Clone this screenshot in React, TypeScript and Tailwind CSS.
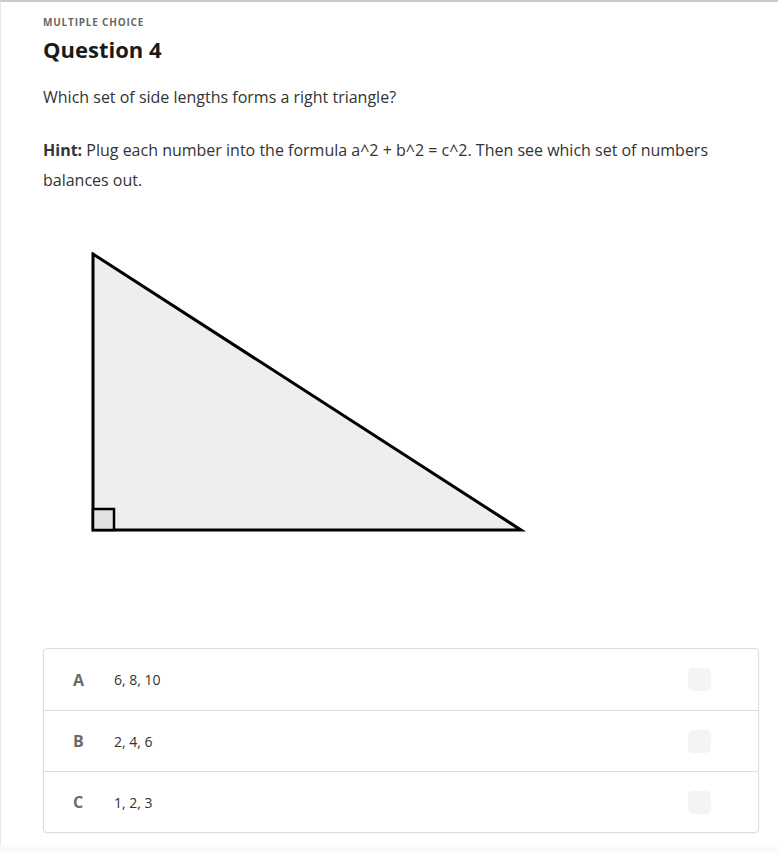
const options = [
  { key: "A", text: "6, 8, 10" },
  { key: "B", text: "2, 4, 6" },
  { key: "C", text: "1, 2, 3" },
];

const Triangle: React.FC = () => (
  <svg width="440" height="290" viewBox="0 0 440 290" className="block">
    <polygon points="2,2 2,278 430,278" fill="#eeeeee" stroke="#000" strokeWidth="3" strokeLinejoin="miter" />
    <rect x="2" y="257" width="21" height="21" fill="#e2e2e2" stroke="#000" strokeWidth="2.5" />
  </svg>
);

export default function App() {
  return (
    <div className="min-h-[852px] bg-[#fafafa] font-['Open_Sans',sans-serif] text-[#333]">
      <div className="border-t-2 border-[#c9c9c9] border-l border-l-[#e6e6e6] bg-white pb-[12px]">
        <div className="px-[42px] pt-[13px]">
          <div className="text-[10px] font-bold tracking-[0.08em] text-[#666] leading-[14px]">MULTIPLE CHOICE</div>
          <h1 className="mt-[5px] text-[22px] font-bold text-[#1a1a1a] leading-[30px]">Question 4</h1>
          <p className="mt-[18px] text-[16px] leading-[30px]">Which set of side lengths forms a right triangle?</p>
          <p className="mt-[23px] text-[16px] leading-[30px]">
            <b className="font-bold">Hint:</b> Plug each number into the formula a^2 + b^2 = c^2. Then see which set of numbers balances out.
          </p>
          <div className="mt-[57px] ml-[48px]">
            <Triangle />
          </div>
          <div className="mt-[106px] mr-[-23px] rounded-[4px] border border-[#dcdcdc] bg-white shadow-[0_1px_2px_rgba(0,0,0,0.04)]">
            {options.map((o, i) => (
              <div
                key={o.key}
                className={`flex h-[61px] items-center ${i > 0 ? "border-t border-[#dcdcdc]" : ""}`}
              >
                <span className="w-[70px] pl-[29px] text-[16px] font-bold text-[#6a6a6a]">{o.key}</span>
                <span className="flex-1 text-[14px] text-[#333]">{o.text}</span>
                <span className="mr-[47px] h-[23px] w-[23px] rounded-[5px] bg-[#f4f4f4]" />
              </div>
            ))}
          </div>
        </div>
      </div>
    </div>
  );
}
